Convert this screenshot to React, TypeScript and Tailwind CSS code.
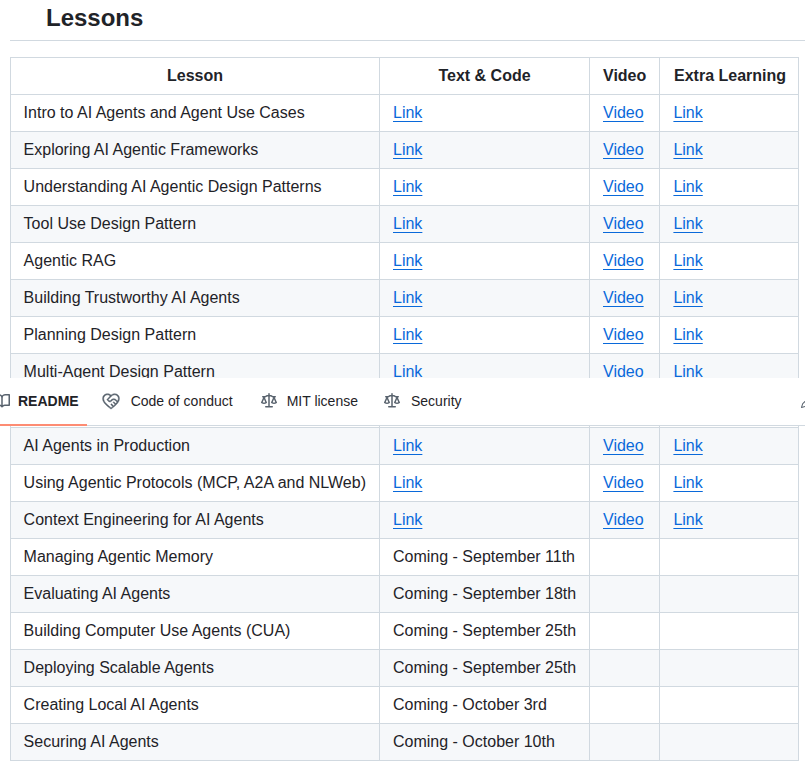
import { GoCodeOfConduct, GoPencil } from "react-icons/go";

const lessons: [string, string | null][] = [
  ["Intro to AI Agents and Agent Use Cases", null],
  ["Exploring AI Agentic Frameworks", null],
  ["Understanding AI Agentic Design Patterns", null],
  ["Tool Use Design Pattern", null],
  ["Agentic RAG", null],
  ["Building Trustworthy AI Agents", null],
  ["Planning Design Pattern", null],
  ["Multi-Agent Design Pattern", null],
  // this row is fully behind the sticky tabs in the picture
  ["\u00a0", "\u00a0"],
  ["AI Agents in Production", null],
  ["Using Agentic Protocols (MCP, A2A and NLWeb)", null],
  ["Context Engineering for AI Agents", null],
  ["Managing Agentic Memory", "Coming - September 11th"],
  ["Evaluating AI Agents", "Coming - September 18th"],
  ["Building Computer Use Agents (CUA)", "Coming - September 25th"],
  ["Deploying Scalable Agents", "Coming - September 25th"],
  ["Creating Local AI Agents", "Coming - October 3rd"],
  ["Securing AI Agents", "Coming - October 10th"],
];

const cell = "border border-[#d1d9e0] px-[13px] py-[6px] leading-6";
const anchor = "text-[#0969da] underline underline-offset-[3px]";

function BookIcon() {
  return (
    <svg viewBox="0 0 16 16" className="h-4 w-4 shrink-0 fill-[#59636e]">
      <path d="M0 1.75A.75.75 0 0 1 .75 1h4.253c1.227 0 2.317.59 3 1.501A3.743 3.743 0 0 1 11.006 1h4.245a.75.75 0 0 1 .75.75v10.5a.75.75 0 0 1-.75.75h-4.507a2.25 2.25 0 0 0-1.591.659l-.622.621a.75.75 0 0 1-1.06 0l-.622-.621A2.25 2.25 0 0 0 5.258 13H.75a.75.75 0 0 1-.75-.75Zm7.251 10.324.004-5.073-.002-2.253A2.25 2.25 0 0 0 5.003 2.5H1.5v9h3.757a3.75 3.75 0 0 1 1.994.574ZM8.755 4.75l-.004 7.322a3.752 3.752 0 0 1 1.992-.572H14.5v-9h-3.495a2.25 2.25 0 0 0-2.25 2.25Z" />
    </svg>
  );
}

function LawIcon() {
  return (
    <svg viewBox="0 0 16 16" className="h-4 w-4 shrink-0 fill-[#59636e]">
      <path d="M8.75.75V2h.985c.304 0 .603.08.867.231l1.29.736c.038.022.08.033.124.033h2.234a.75.75 0 0 1 0 1.5h-.427l2.111 4.692a.75.75 0 0 1-.154.838l-.53-.53.529.531-.001.002-.002.002-.006.006-.006.005-.01.01-.045.04c-.21.176-.441.327-.686.45C14.556 10.78 13.88 11 13 11a4.498 4.498 0 0 1-2.023-.454 3.544 3.544 0 0 1-.686-.45l-.045-.04-.016-.015-.006-.006-.004-.004v-.001a.75.75 0 0 1-.154-.838L12.178 4.5h-.162c-.305 0-.604-.079-.868-.231l-1.29-.736a.245.245 0 0 0-.124-.033H8.75V13h2.5a.75.75 0 0 1 0 1.5h-6.5a.75.75 0 0 1 0-1.5h2.5V3.5h-.984a.245.245 0 0 0-.124.033l-1.289.737c-.265.15-.564.23-.869.23h-.162l2.112 4.692a.75.75 0 0 1-.154.838l-.53-.53.529.531-.001.002-.002.002-.006.006-.016.015-.045.04c-.21.176-.441.327-.686.45C4.556 10.78 3.88 11 3 11a4.498 4.498 0 0 1-2.023-.454 3.544 3.544 0 0 1-.686-.45l-.045-.04-.016-.015-.006-.006-.004-.004v-.001a.75.75 0 0 1-.154-.838L2.178 4.5H1.75a.75.75 0 0 1 0-1.5h2.234a.249.249 0 0 0 .125-.033l1.288-.737c.265-.15.564-.23.869-.23h.984V.75a.75.75 0 0 1 1.5 0Zm2.945 8.477c.285.135.718.273 1.305.273s1.02-.138 1.305-.273L13 6.327Zm-10 0c.285.135.718.273 1.305.273s1.02-.138 1.305-.273L3 6.327Z" />
    </svg>
  );
}

export default function App() {
  return (
    <div className="relative h-[769px] w-[805px] overflow-hidden bg-white font-['Liberation_Sans',Arial,sans-serif] text-base text-[#1f2328]">
      <div className="pl-[10px]">
        <div className="h-[41px] border-b border-[#d1d9e0] pl-[36px]">
          <h2 className="text-2xl leading-9 font-bold">Lessons</h2>
        </div>
        <table className="mt-4 w-[789px] table-fixed border-collapse">
          <thead>
            <tr className="bg-white">
              <th className={`${cell} w-[369px] font-bold`}>Lesson</th>
              <th className={`${cell} w-[210px] font-bold`}>Text &amp; Code</th>
              <th className={`${cell} w-[70px] font-bold`}>Video</th>
              <th className={`${cell} !pl-[14px] font-bold whitespace-nowrap`}>Extra Learning</th>
            </tr>
          </thead>
          <tbody>
            {lessons.map(([name, coming], i) => (
              <tr key={i} className={i % 2 === 1 ? "bg-[#f6f8fa]" : "bg-white"}>
                <td className={`${cell} whitespace-nowrap !pl-[12.6px]`}>{name}</td>
                <td className={`${cell} whitespace-nowrap`}>
                  {coming ?? <a className={anchor}>Link</a>}
                </td>
                <td className={cell}>{!coming && <a className={anchor}>Video</a>}</td>
                <td className={`${cell} !pl-[13.4px]`}>
                  {!coming && <a className={anchor}>Link</a>}
                </td>
              </tr>
            ))}
          </tbody>
        </table>
      </div>

      {/* sticky readme tabs, sits on top of the table */}
      <div className="absolute top-[378px] right-0 left-0 flex h-[48px] items-start border-b border-[#d1d9e0] bg-white text-sm">
        <div className="-ml-[6px] flex h-[48px] items-center gap-[8px] border-b-2 border-[#fd8c73] pr-[8px] pb-[1px]">
          <BookIcon />
          <span className="font-bold">README</span>
        </div>
        <div className="flex h-[47px] items-center pb-[1px] pl-[16px]">
          <div className="mr-[28px] flex items-center gap-[12px]">
            <GoCodeOfConduct className="h-4 w-4 scale-[1.15] stroke-[#59636e] stroke-[0.6] text-[#59636e]" />
            <span>Code of conduct</span>
          </div>
          <div className="mr-[26px] flex items-center gap-[10px]">
            <LawIcon />
            <span>MIT license</span>
          </div>
          <div className="flex items-center gap-[11px]">
            <LawIcon />
            <span>Security</span>
          </div>
        </div>
        <GoPencil className="absolute top-[15px] left-[800px] h-4 w-4 text-[#59636e]" />
      </div>
    </div>
  );
}
